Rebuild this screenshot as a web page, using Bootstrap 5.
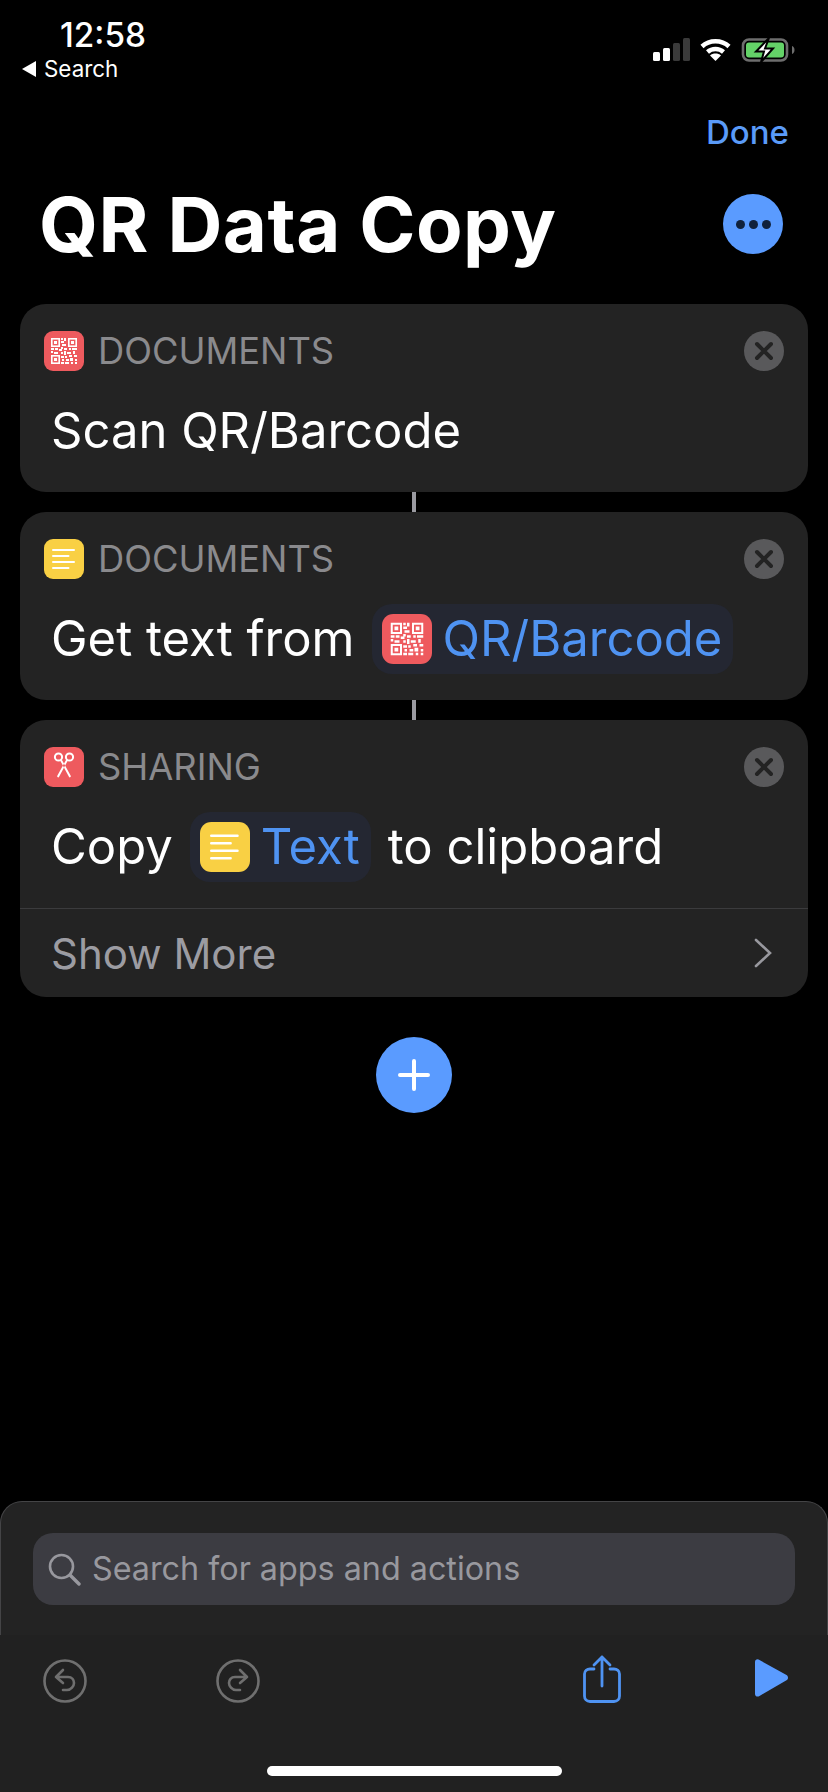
<!DOCTYPE html>
<html lang="en">
<head>
  <meta charset="utf-8" />
  <title>QR Data Copy</title>
  <meta name="viewport" content="width=device-width, initial-scale=1.0" />
  <link href="https://cdn.jsdelivr.net/npm/bootstrap@5.3.2/dist/css/bootstrap.min.css" rel="stylesheet">
  <style>
    body {
      background: #000;
      color: #fff;
      font-family: Inter, "Liberation Sans", sans-serif;
      overflow: hidden;
    }
    .phone-page { height: 1792px; }

    /* status bar */
    .status-strip { height: 96px; }
    .status-left { padding-top: 16px; }
    .status-time { font-size: 33.300px; font-weight: 500; line-height: 38px; padding-left: 60px; }
    .status-back { font-size: 22.400px; line-height: 28px; padding-left: 22px; margin-top: 1px; gap: 8px; }
    .back-arrow { width: 14px; height: 16px; }
    .status-icons { margin-top: 35px; margin-right: 30px; }

    /* header */
    .done-row { height: 40px; margin-top: 16px; margin-bottom: 32px; padding-right: 39px; }
    .done-btn { color: #5a9bf8; font-size: 33px; font-weight: 500; padding: 0; border: 0; line-height: 40px; }
    .title-row { height: 80px; margin-bottom: 40px; padding: 0 45px 0 39px; }
    .title-text { font-size: 76px; font-weight: 700; margin: 0; line-height: 80px; letter-spacing: .5px; }
    .more-btn { width: 60px; height: 60px; background: #5a9bff; gap: 4px; }
    .more-dot { width: 9px; height: 9px; background: #10213c; }

    /* action cards */
    .action-stack { padding: 0 20px; }
    .action-card { background: #232323; border: 0; border-radius: 26px; color: #fff; }
    .action-head { height: 40px; margin: 27px 24px 0; }
    .action-label { color: #8a8a8d; font-size: 36.300px; line-height: 40px; margin-left: 14px; }
    .close-btn { width: 40px; height: 40px; background: #59595b; }
    .action-line { height: 70px; margin: 24px 31px 27px; font-size: 49px; gap: 17px; white-space: nowrap; padding-top: 1px; }
    .app-icon { width: 40px; height: 40px; display: block; flex: none; }
    .var-chip { height: 70px; background: #242732; border-radius: 20px; color: #4f93f2; padding: 0 11px 0 10px; gap: 11px; }
    .var-chip .app-icon { width: 50px; height: 50px; }
    .link-line { width: 4px; height: 20px; background: #9a9aa0; }
    .show-row { height: 89px; border-top: 1px solid #3b3b3d; padding: 0 36px 0 31px; font-size: 42px; color: #9c9ca2; }

    .add-btn { width: 76px; height: 76px; background: #5a9bff; margin-top: 40px; }

    /* bottom sheet */
    .sheet { height: 134px; background: #232323; border: 1px solid #444446; border-bottom: 0; border-radius: 22px 22px 0 0; padding: 31px 32px 0; }
    .search-field { height: 72px; background: #3c3c42; border-radius: 20px; padding-left: 15px; gap: 11px; color: #98989e; font-size: 32.300px; }
    .toolbar { height: 157px; background: #212121; }
    .tool-row { padding: 20px 40px 0 43px; }
    .tool-icon { display: block; flex: none; }
    .tool-gap { gap: 129px; }
    .tool-gap-right { gap: 134px; }
    .home-bar { width: 295px; height: 10px; background: #fff; border-radius: 5px; margin-top: 63px; }
  </style>
</head>
<body>
  <svg width="0" height="0" class="position-absolute">
    <symbol id="qrIcon" viewBox="0 0 40 40">
      <rect width="40" height="40" rx="9" fill="#ee5a5e" />
      <g fill="none" stroke="#fff" stroke-width="1.6">
        <rect x="7.8" y="7.8" width="7.4" height="7.4" />
        <rect x="24.8" y="7.8" width="7.4" height="7.4" />
        <rect x="7.8" y="24.8" width="7.4" height="7.4" />
      </g>
      <path fill="#fff" d="M10 10h3v3h-3zM27 10h3v3h-3zM10 27h3v3h-3zM17 7h2v2h-2zM20 7h2v3h-2zM17 10h3v2h-3zM18 13h4v2h-4zM17 16h2v2h-2zM7 17h3v2H7zM11 17h3v2h-3zM15 18h3v2h-3zM20 17h3v2h-3zM25 17h2v2h-2zM28 17h5v2h-5zM7 20h2v2H7zM10 21h4v2h-4zM17 21h2v2h-2zM20 20h2v4h-2zM23 21h4v2h-4zM29 20h2v3h-2zM17 25h3v2h-3zM21 25h2v2h-2zM25 24h3v2h-3zM30 24h3v2h-3zM18 28h2v2h-2zM22 28h3v2h-3zM26 27h3v3h-3zM31 28h2v2h-2zM17 31h3v2h-3zM21 31h4v2h-4zM27 31h2v2h-2zM31 31h2v2h-2z" />
    </symbol>
    <symbol id="textIcon" viewBox="0 0 40 40">
      <rect width="40" height="40" rx="9" fill="#f9d044" />
      <path stroke="#fff" stroke-width="2" stroke-linecap="round" d="M9 11h21M9 17h15.500M9 23h21M9 29h15.500" />
    </symbol>
    <symbol id="scissorsIcon" viewBox="0 0 40 40">
      <rect width="40" height="40" rx="9" fill="#ee5a5e" />
      <circle cx="14.500" cy="10" r="3.600" fill="none" stroke="#fff" stroke-width="2" />
      <circle cx="25.500" cy="10" r="3.600" fill="none" stroke="#fff" stroke-width="2" />
      <path fill="#fff" d="M16 13.200l1.700-.8 9 16.300c.4 1 -.4 2 -1.500 1.600zM24 13.200l-1.700-.8 -9 16.300c-.4 1 .4 2 1.500 1.600z" />
    </symbol>
    <symbol id="closeIcon" viewBox="0 0 40 40">
      <path stroke="#232323" stroke-width="4" stroke-linecap="round" d="M13 13l14 14M27 13L13 27" />
    </symbol>
  </svg>

  <div class="phone-page d-flex flex-column">
    <div class="status-strip d-flex justify-content-between">
      <div class="status-left">
        <div class="status-time">12:58</div>
        <div class="status-back d-flex align-items-center">
          <svg class="back-arrow" viewBox="0 0 14 16"><path fill="#fff" d="M14 0v16L0 8z" /></svg>
          <span>Search</span>
        </div>
      </div>
      <svg class="status-icons" width="148" height="28" viewBox="650 35 148 28">
        <rect x="653" y="52" width="7" height="9" rx="1.500" fill="#fff" />
        <rect x="663" y="48" width="7" height="13" rx="1.500" fill="#fff" />
        <rect x="673" y="43" width="7" height="18" rx="1.500" fill="#3a3a3a" />
        <rect x="683" y="38" width="7" height="23" rx="1.500" fill="#3a3a3a" />
        <g fill="none" stroke="#fff" stroke-width="4.500">
          <path d="M702 46.500c7.500-7 19.500-7 27 0" />
          <path d="M707.500 52c4.500-4 11.500-4 16 0" />
        </g>
        <path fill="#fff" d="M715.500 61l-5.500-5.500c3-2.600 8-2.600 11 0z" />
        <rect x="743" y="39.500" width="44" height="21" rx="6" fill="none" stroke="#6d6d6d" stroke-width="2.600" />
        <rect x="746" y="42.500" width="38" height="15" rx="3" fill="#64d368" />
        <path d="M792 46c1.500.5 2.500 2 2.500 4s-1 3.500-2.500 4z" fill="#6d6d6d" />
        <path fill="#fff" stroke="#000" stroke-width="2" d="M769 38l-13 13.500h8l-3 10.500 12-13.500h-8z" />
      </svg>
    </div>

    <div class="done-row d-flex justify-content-end">
      <button class="btn done-btn" type="button">Done</button>
    </div>

    <div class="title-row d-flex justify-content-between align-items-center">
      <h1 class="title-text">QR Data Copy</h1>
      <button class="btn more-btn rounded-circle d-flex justify-content-center align-items-center p-0 border-0" type="button" aria-label="More">
        <span class="more-dot rounded-circle"></span><span class="more-dot rounded-circle"></span><span class="more-dot rounded-circle"></span>
      </button>
    </div>

    <div class="action-stack">
      <div class="card action-card">
        <div class="action-head d-flex align-items-center">
          <svg class="app-icon"><use href="#qrIcon" /></svg>
          <span class="action-label">DOCUMENTS</span>
          <svg class="close-btn rounded-circle ms-auto"><use href="#closeIcon" /></svg>
        </div>
        <div class="action-line d-flex align-items-center">Scan QR/Barcode</div>
      </div>
      <div class="link-line mx-auto"></div>
      <div class="card action-card">
        <div class="action-head d-flex align-items-center">
          <svg class="app-icon"><use href="#textIcon" /></svg>
          <span class="action-label">DOCUMENTS</span>
          <svg class="close-btn rounded-circle ms-auto"><use href="#closeIcon" /></svg>
        </div>
        <div class="action-line d-flex align-items-center">
          <span>Get text from</span>
          <span class="var-chip d-flex align-items-center"><svg class="app-icon"><use href="#qrIcon" /></svg>QR/Barcode</span>
        </div>
      </div>
      <div class="link-line mx-auto"></div>
      <div class="card action-card">
        <div class="action-head d-flex align-items-center">
          <svg class="app-icon"><use href="#scissorsIcon" /></svg>
          <span class="action-label">SHARING</span>
          <svg class="close-btn rounded-circle ms-auto"><use href="#closeIcon" /></svg>
        </div>
        <div class="action-line d-flex align-items-center">
          <span>Copy</span>
          <span class="var-chip d-flex align-items-center"><svg class="app-icon"><use href="#textIcon" /></svg>Text</span>
          <span>to clipboard</span>
        </div>
        <div class="show-row d-flex justify-content-between align-items-center">
          <span>Show More</span>
          <svg width="18" height="30" viewBox="0 0 18 30"><path fill="none" stroke="#98989e" stroke-width="2.600" stroke-linecap="round" d="M2 2l14 13L2 28" /></svg>
        </div>
      </div>
    </div>

    <button class="btn add-btn rounded-circle d-flex justify-content-center align-items-center mx-auto p-0 border-0" type="button" aria-label="Add">
      <svg width="34" height="34" viewBox="0 0 34 34"><path stroke="#fff" stroke-width="4" stroke-linecap="round" d="M17 3v28M3 17h28" /></svg>
    </button>

    <div class="sheet mt-auto">
      <div class="search-field d-flex align-items-center">
        <svg width="33" height="33" viewBox="0 0 33 33" fill="none" stroke="#98989e"><circle cx="13.500" cy="13.500" r="11.500" stroke-width="2.600" /><path stroke-width="3.400" stroke-linecap="round" d="M22 22l9 9" /></svg>
        <span>Search for apps and actions</span>
      </div>
    </div>
    <div class="toolbar">
      <div class="tool-row d-flex justify-content-between align-items-start">
        <div class="d-flex tool-gap">
          <svg class="tool-icon mt-1" width="44" height="44" viewBox="0 0 44 44" fill="none" stroke="#6f6f6f" stroke-width="2.600"><circle cx="22" cy="22" r="20.500" /><path stroke-linecap="round" stroke-linejoin="round" d="M20 11l-7 7 7 6M13 18h12c4 0 6 3 6 6s-3 7-7 7h-4" /></svg>
          <svg class="tool-icon mt-1" width="44" height="44" viewBox="0 0 44 44" fill="none" stroke="#6f6f6f" stroke-width="2.600"><circle cx="22" cy="22" r="20.500" /><path stroke-linecap="round" stroke-linejoin="round" d="M24 11l7 7-7 6M31 18H19c-4 0-6 3-6 6s3 7 7 7h4" /></svg>
        </div>
        <div class="d-flex tool-gap-right">
          <svg class="tool-icon" width="38" height="48" viewBox="0 0 38 48" fill="none" stroke="#4f93f2" stroke-width="2.800"><path stroke-linecap="round" stroke-linejoin="round" d="M11 14H7c-3 0-5.500 2-5.500 5v22c0 3 2 5.500 5.500 5.500h24c3.500 0 5.500-2.500 5.500-5.500V19c0-3-2.500-5-5.500-5h-4M19 31V2M11 10l8-8 8 8" /></svg>
          <svg class="tool-icon mt-1" width="33" height="38" viewBox="0 0 33 38"><path fill="#5a9bff" d="M0 3c0-2.500 2.500-3.500 4.500-2l27 15c2 1.300 2 4 0 5.200l-27 15.800c-2 1.300-4.500.3-4.500-2z" /></svg>
        </div>
      </div>
      <div class="home-bar mx-auto"></div>
    </div>
  </div>
  <script src="https://cdn.jsdelivr.net/npm/bootstrap@5.3.2/dist/js/bootstrap.bundle.min.js"></script>
</body>
</html>
